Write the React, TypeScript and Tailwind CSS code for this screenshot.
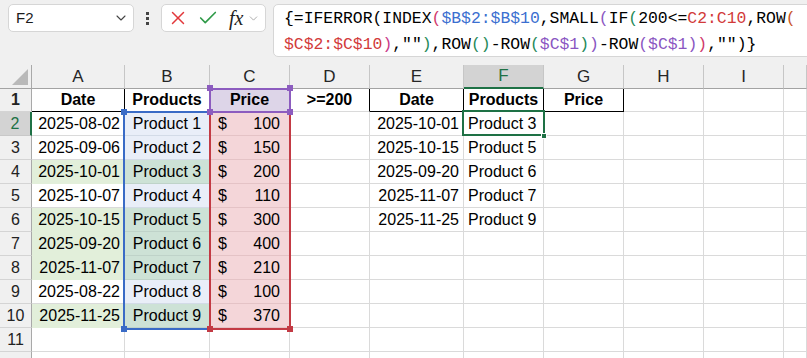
import React from 'react';
import { ChevronDown, X, Check } from 'lucide-react';

const W = ['w-[32px]', 'w-[93px]', 'w-[85px]', 'w-[80px]', 'w-[80px]', 'w-[94px]', 'w-[80px]', 'w-[80px]', 'w-[80px]', 'w-[80px]', 'flex-1'];
const LETTERS = ['', 'A', 'B', 'C', 'D', 'E', 'F', 'G', 'H', 'I', ''];

const dates = ['2025-08-02', '2025-09-06', '2025-10-01', '2025-10-07', '2025-10-15', '2025-09-20', '2025-11-07', '2025-08-22', '2025-11-25'];
const prices = [100, 150, 200, 110, 300, 400, 210, 100, 370];
const green = [false, false, true, false, true, true, true, false, true];
const results = [
  ['2025-10-01', 'Product 3'],
  ['2025-10-15', 'Product 5'],
  ['2025-09-20', 'Product 6'],
  ['2025-11-07', 'Product 7'],
  ['2025-11-25', 'Product 9'],
];

const Cell: React.FC<{ w: string; className?: string; children?: React.ReactNode }> = ({ w, className = '', children }) => (
  <div className={`${w} shrink-0 h-full border-r border-b flex items-center overflow-hidden whitespace-nowrap ${className}`}>
    {children}
  </div>
);

const RowHead: React.FC<{ n?: number; active?: boolean }> = ({ n, active }) => (
  <Cell
    w={W[0]}
    className={
      active
        ? 'justify-center bg-[#d3d3d3] text-[#1e7145] border-b-[#c8c8c8] border-r-2 border-r-[#1e7145]'
        : 'justify-center bg-[#f0f0f0] text-[#222] border-b-[#d4d4d4] border-r-[#a9a9a9]'
    }
  >
    {n}
  </Cell>
);

const EmptyCells: React.FC<{ from: number }> = ({ from }) => (
  <>
    {W.slice(from).map((w, i) => (
      <Cell key={i} w={w} className="border-[#dadada]" />
    ))}
  </>
);

const Formula = () => (
  <div className="font-['Liberation_Mono',monospace] text-[16.4px] leading-[26px] text-black pl-[10px] pt-[1px] whitespace-nowrap">
    <div>
      {'{=IFERROR(INDEX'}
      <span className="text-[#d0396c]">(</span>
      <span className="text-[#3b6fd0]">$B$2:$B$10</span>
      ,SMALL<span className="text-[#8a56c2]">(</span>
      IF<span className="text-[#1f8a5a]">(</span>
      200&lt;=<span className="text-[#d23a3a]">C2:C10</span>
      ,ROW<span className="text-[#c9551f]">(</span>
    </div>
    <div>
      <span className="text-[#d23a3a]">$C$2:$C$10</span>
      <span className="text-[#c9398a]">)</span>,""<span className="text-[#1f8a5a]">)</span>
      ,ROW<span className="text-[#1f8a5a]">()</span>-ROW<span className="text-[#1f8a5a]">(</span>
      <span className="text-[#8a56c2]">$C$1</span>
      <span className="text-[#1f8a5a]">)</span>
      <span className="text-[#8a56c2]">)</span>-ROW<span className="text-[#8a56c2]">(</span>
      <span className="text-[#8a56c2]">$C$1</span>
      <span className="text-[#8a56c2]">)</span>
      <span className="text-[#d0396c]">)</span>,"")
      {'}'}
    </div>
  </div>
);

export default function App() {
  return (
    <div className="relative w-[807px] h-[358px] overflow-hidden bg-white font-['Liberation_Sans',Arial,sans-serif] text-[16px] text-black">
      {/* formula bar */}
      <div className="h-[65px] bg-[#f0f0f0] flex items-start pt-[4px] pl-[8px] overflow-hidden">
        <div className="w-[126px] h-[28px] shrink-0 bg-white border border-[#d6d6d6] rounded-[5px] flex items-center justify-between pl-[7px] pr-[4px]">
          <span className="text-[15px] text-[#1b1b1b]">F2</span>
          <ChevronDown size={16} strokeWidth={1.6} className="text-[#444]" />
        </div>
        <div className="w-[27px] h-[28px] shrink-0 flex flex-col items-center justify-center gap-[2px]">
          <span className="w-[3px] h-[3px] bg-[#444]" />
          <span className="w-[3px] h-[3px] bg-[#444]" />
          <span className="w-[3px] h-[3px] bg-[#444]" />
        </div>
        <div className="w-[105px] h-[28px] shrink-0 bg-white border border-[#d6d6d6] rounded-[5px] flex items-center pl-[5px]">
          <X size={22} strokeWidth={1.6} className="text-[#e2383b]" />
          <Check size={22} strokeWidth={1.8} className="text-[#2f9a48] ml-[8px]" />
          <span className="ml-[10px] font-['Liberation_Serif',serif] italic text-[20px] leading-none text-[#222]">fx</span>
          <ChevronDown size={13} strokeWidth={1.5} className="text-[#9a9a9a] ml-[4px]" />
        </div>
        <div className="w-[600px] h-[53px] shrink-0 ml-[7px] bg-white border border-[#d6d6d6] rounded-[5px]">
          <Formula />
        </div>
      </div>

      {/* column headers */}
      <div className="flex h-[24px]">
        <Cell w={W[0]} className="bg-[#f0f0f0] border-r-[#a9a9a9] border-b-[#a3a3a3] items-end justify-end pr-[3px] pb-[3px]">
          <svg width="16" height="16" viewBox="0 0 16 16">
            <polygon points="16,0 16,16 0,16" fill="#b9b9b9" />
          </svg>
        </Cell>
        {W.slice(1).map((w, i) => {
          const active = LETTERS[i + 1] === 'F';
          return (
            <Cell
              key={i}
              w={w}
              className={
                active
                  ? 'justify-center bg-[#d3d3d3] text-[#1e7145] text-[17px] border-r-[#c6c6c6] border-b-2 border-b-[#1e7145]'
                  : 'justify-center bg-[#f0f0f0] text-[#262626] text-[17px] border-r-[#c6c6c6] border-b-[#a3a3a3]'
              }
            >
              {LETTERS[i + 1]}
            </Cell>
          );
        })}
      </div>

      {/* row 1 */}
      <div className="flex h-[23px] font-bold">
        <RowHead n={1} />
        <Cell w={W[1]} className="justify-center border-r-black border-b-black">Date</Cell>
        <Cell w={W[2]} className="justify-center border-r-black border-b-black">Products</Cell>
        <Cell w={W[3]} className="justify-center bg-[#ddd5e8] border-[#dadada]">Price</Cell>
        <Cell w={W[4]} className="justify-center border-r-black border-b-[#dadada]">&gt;=200</Cell>
        <Cell w={W[5]} className="justify-center border-r-black border-b-black">Date</Cell>
        <Cell w={W[6]} className="justify-center border-r-black border-b-black">Products</Cell>
        <Cell w={W[7]} className="justify-center border-r-black border-b-black">Price</Cell>
        <EmptyCells from={8} />
      </div>

      {/* rows 2-10 */}
      {dates.map((d, i) => {
        const res = results[i];
        return (
          <div key={i} className="flex h-[24px]">
            <RowHead n={i + 2} active={i === 0} />
            <Cell w={W[1]} className={green[i] ? 'justify-end pr-[4px] bg-[#e2efda] border-[#e2efda] border-r-[#dadada]' : 'justify-end pr-[4px] border-[#dadada]'}>
              {d}
            </Cell>
            <Cell w={W[2]} className={green[i] ? 'justify-center bg-[#cde2d6] border-[#bfd3c9]' : 'justify-center bg-[#e9eef8] border-[#d3dbe7]'}>
              Product {i + 1}
            </Cell>
            <Cell w={W[3]} className="justify-between pl-[8px] pr-[9px] bg-[#f4d6d9] border-[#e4c3c6]">
              <span>$</span>
              <span>{prices[i]}</span>
            </Cell>
            <Cell w={W[4]} className="border-[#dadada]" />
            <Cell w={W[5]} className="justify-end pr-[4px] border-[#dadada]">{res ? res[0] : ''}</Cell>
            <Cell w={W[6]} className="pl-[4px] border-[#dadada]">{res ? res[1] : ''}</Cell>
            <EmptyCells from={7} />
          </div>
        );
      })}

      {/* row 11 and the top of the next one */}
      <div className="flex h-[24px]">
        <RowHead n={11} />
        <EmptyCells from={1} />
      </div>
      <div className="flex h-[24px]">
        <RowHead />
        <EmptyCells from={1} />
      </div>

      {/* reference range highlights */}
      <div className="absolute left-[123px] top-[111px] w-[88px] h-[219px] border-2 border-[#3a6bc6]" />
      <div className="absolute left-[209px] top-[111px] w-[82px] h-[219px] border-2 border-[#c33a44]" />
      <div className="absolute left-[209px] top-[88px] w-[82px] h-[25px] border-2 border-[#8c5cbf]" />
      <div className="absolute left-[121px] top-[109px] w-[6px] h-[6px] bg-[#3a6bc6]" />
      <div className="absolute left-[121px] top-[326px] w-[6px] h-[6px] bg-[#3a6bc6]" />
      <div className="absolute left-[207px] top-[85px] w-[6px] h-[6px] bg-[#8c5cbf]" />
      <div className="absolute left-[287px] top-[85px] w-[6px] h-[6px] bg-[#8c5cbf]" />
      <div className="absolute left-[207px] top-[109px] w-[6px] h-[6px] bg-[#8c5cbf]" />
      <div className="absolute left-[287px] top-[109px] w-[6px] h-[6px] bg-[#8c5cbf]" />
      <div className="absolute left-[207px] top-[326px] w-[6px] h-[6px] bg-[#c33a44]" />
      <div className="absolute left-[287px] top-[326px] w-[6px] h-[6px] bg-[#c33a44]" />

      {/* active cell F2 */}
      <div className="absolute left-[462px] top-[110px] w-[83px] h-[26px] border-2 border-[#1e7145]" />
      <div className="absolute left-[541px] top-[133px] w-[6px] h-[6px] bg-[#1e7145] border border-white" />
    </div>
  );
}
